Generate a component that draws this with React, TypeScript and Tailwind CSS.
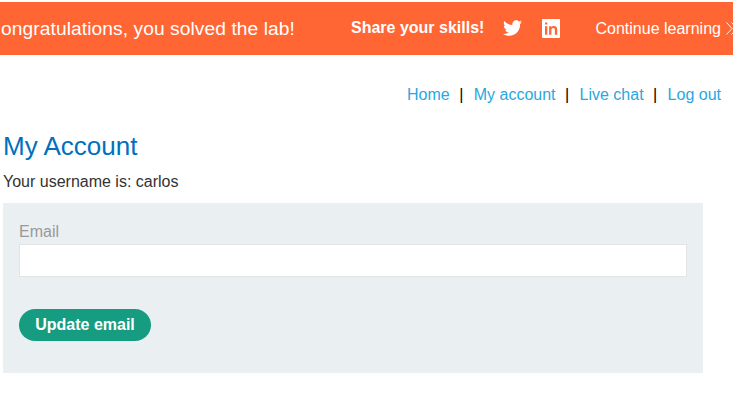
import { FaTwitter } from "react-icons/fa";

const links = ["Home", "My account", "Live chat", "Log out"];

function LinkedInIcon() {
  return (
    <svg className="ml-5 mt-[17px] h-[19px] w-[18px] shrink-0" viewBox="0 0 18 19" preserveAspectRatio="none">
      <rect width="18" height="19" rx="1" fill="#fff" />
      <g fill="#ff6633">
        <path d="M3 3.500h2.300v2H3zM3 7.200h2.300v8.600H3zM7.100 7.200h2.300v1c.5-.8 1.400-1.200 2.500-1.200 2.500 0 3.300 1.500 3.300 4v4.800h-2.300v-4.400c0-1.500-.4-2.300-1.600-2.300s-1.900.8-1.900 2.300v4.400H7.100z" />
      </g>
    </svg>
  );
}

function Banner() {
  return (
    <header className="mt-[2px] flex h-[53px] w-[733px] items-start overflow-hidden whitespace-nowrap bg-[#ff6633] text-white">
      <p className="w-[351px] shrink-0 pl-px pt-[15px] text-[19.2px] leading-[24px] tracking-[0.08px]">ongratulations, you solved the lab!</p>
      <p className="w-[152px] shrink-0 pt-[14px] text-base font-bold">Share your skills!</p>
      <FaTwitter className="mt-[16px] h-[20px] w-[19px] shrink-0" />
      <LinkedInIcon />
      <a className="ml-[35.5px] flex shrink-0 items-start pt-[15px] text-base">
        Continue learning
        <svg className="ml-[5px] mt-[5px] h-[13px] w-[12px]" viewBox="0 0 12 13" fill="none" stroke="#fff" strokeWidth="0.9">
          <path d="M.5.5 6 6.500l-5.500 6M5.500.5l5.500 6-5.500 6" />
        </svg>
      </a>
    </header>
  );
}

export default function App() {
  return (
    <div className="h-[406px] w-[733px] overflow-hidden bg-white font-['Liberation_Sans',Arial,sans-serif] text-[#333332]">
      <Banner />
      <nav className="mt-[28px] flex h-6 justify-end pr-3 text-base">
        {links.map((link, i) => (
          <span key={link} className="flex">
            {i > 0 && <span className="w-6 pr-px text-center text-black">|</span>}
            <a className="text-[#29a7e1]">{link}</a>
          </span>
        ))}
      </nav>
      <main className="pl-[3px]">
        <h1 className="mt-[21px] text-[26px] leading-[36px] text-[#0071bc]">My Account</h1>
        <p className="mt-[6px] text-base">Your username is: carlos</p>
        <form className="mt-[9px] h-[170px] w-[700px] bg-[#eaeff2] px-4 pt-[17px]">
          <label className="block text-base text-[#999999]">Email</label>
          <input className="block h-[33px] w-full border border-[#e4e4e4] bg-white px-2 outline-none" />
          <button type="button" className="mt-8 flex h-8 w-[132px] items-center justify-center rounded-full bg-[#169c80] text-base font-bold text-white">
            Update email
          </button>
        </form>
      </main>
    </div>
  );
}
